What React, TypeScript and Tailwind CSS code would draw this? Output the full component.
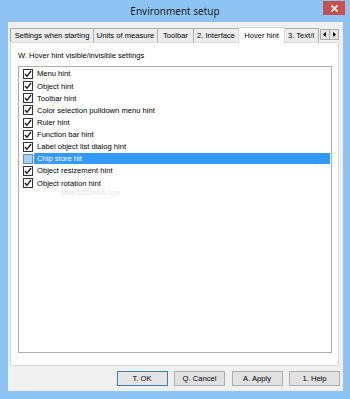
import React from "react";

const items: { label: string; checked: boolean; selected?: boolean }[] = [
  { label: "Menu hint", checked: true },
  { label: "Object hint", checked: true },
  { label: "Toolbar hint", checked: true },
  { label: "Color selection pulldown menu hint", checked: true },
  { label: "Ruler hint", checked: true },
  { label: "Function bar hint", checked: true },
  { label: "Label object list dialog hint", checked: true },
  { label: "Chip store hit", checked: false, selected: true },
  { label: "Object resizement hint", checked: true },
  { label: "Object rotation hint", checked: true },
];

function Check({ checked, selected }: { checked: boolean; selected?: boolean }) {
  return (
    <div
      className={
        selected
          ? "w-[10px] h-[10px] border border-[#5a8ec7] bg-[#a8cff5] shrink-0"
          : "w-[10px] h-[10px] border border-[#333333] bg-white shrink-0 flex items-center justify-center"
      }
    >
      {checked && (
        <svg width="8" height="8" viewBox="0 0 8 8">
          <path d="M1 4 L3 6.3 L7 1" fill="none" stroke="#111" strokeWidth="1.3" />
        </svg>
      )}
    </div>
  );
}

function Tab({ label, w, active }: { label: string; w: string; active?: boolean }) {
  if (active) {
    return (
      <div
        className={`${w} h-[16px] -mx-[1px] -mb-[1px] self-end bg-white border border-[#d9d9d9] border-b-0 flex items-center justify-center z-10 whitespace-nowrap`}
      >
        {label}
      </div>
    );
  }
  return (
    <div
      className={`${w} h-[14px] self-end bg-[#ececec] border border-[#acacac] border-b-0 -ml-[1px] first:ml-0 flex items-center justify-center whitespace-nowrap overflow-hidden`}
    >
      {label}
    </div>
  );
}

function Btn({ label, def }: { label: string; def?: boolean }) {
  return (
    <div
      className={
        def
          ? "w-[51px] h-[15px] border border-[#3c7fb1] bg-[#e5e5e5] flex items-center justify-center"
          : "w-[51px] h-[15px] border border-[#adadad] bg-[#e1e1e1] flex items-center justify-center"
      }
    >
      {label}
    </div>
  );
}

export default function App() {
  return (
    <div
      className="w-[350px] h-[399px] bg-[#8dc4f3] relative overflow-hidden text-[7.6px] text-black"
      style={{ fontFamily: '"Liberation Sans", Arial, sans-serif' }}
    >
      {/* Title bar */}
      <div className="h-[22px] flex items-center justify-center">
        <span
          className="text-[10px] text-[#1a1a1a] pt-[1px]"
          style={{ fontFamily: '"Noto Sans", "Open Sans", sans-serif' }}
        >
          Environment setup
        </span>
      </div>
      <div className="absolute top-[1px] right-[5px] w-[22px] h-[14px] bg-[#c75050] flex items-center justify-center">
        <svg width="7" height="7" viewBox="0 0 7 7">
          <path d="M0.5 0.5 L6.5 6.5 M6.5 0.5 L0.5 6.5" stroke="#fff" strokeWidth="1.6" />
        </svg>
      </div>

      {/* Client area */}
      <div className="ml-[8px] mr-[7px] h-[369px] bg-[#f0f0f0] flex flex-col px-[2px] pt-[6px]">
        {/* Tab row */}
        <div className="h-[14px] flex items-end relative">
          <Tab label="Settings when starting" w="w-[84px]" />
          <Tab label="Units of measure" w="w-[65px]" />
          <Tab label="Toolbar" w="w-[37px]" />
          <Tab label="2. Interface" w="w-[46px]" />
          <Tab label="Hover hint" w="w-[47px]" active />
          <div className="w-[36px] h-[14px] self-end bg-[#ececec] border border-[#acacac] border-b-0 -ml-[1px] overflow-hidden whitespace-nowrap pl-[4px] flex items-center">
            3. Text/I
          </div>
          <div className="absolute right-[2px] top-[1px] flex">
            <div className="w-[10px] h-[11px] bg-[#e6e6e6] border border-[#adadad] flex items-center justify-center">
              <svg width="4" height="5" viewBox="0 0 4 5">
                <path d="M3 0 L0 2.5 L3 5 Z" fill="#000" />
              </svg>
            </div>
            <div className="w-[10px] h-[11px] bg-[#e6e6e6] border border-[#adadad] -ml-[1px] flex items-center justify-center">
              <svg width="4" height="5" viewBox="0 0 4 5">
                <path d="M1 0 L4 2.5 L1 5 Z" fill="#000" />
              </svg>
            </div>
          </div>
        </div>

        {/* Panel */}
        <div className="w-[329px] h-[324px] bg-white border border-[#d9d9d9] flex flex-col px-[7px] pr-[6px]">
          <div className="h-[23px] flex items-end pb-[5px]">W. Hover hint visible/invisible settings</div>
          <div className="h-[287px] border border-[#acacac] flex flex-col pt-[1px] pl-[4px] pr-[1px] relative">
            {items.map((it) => (
              <div key={it.label} className="h-[12.14px] flex items-center shrink-0">
                <Check checked={it.checked} selected={it.selected} />
                <div
                  className={
                    it.selected
                      ? "flex-1 h-[11px] ml-[1px] bg-[#3399ff] text-white flex items-center pl-[3px]"
                      : "flex-1 h-[11px] ml-[1px] flex items-center pl-[3px]"
                  }
                >
                  {it.label}
                </div>
              </div>
            ))}
            <div className="absolute left-[41px] top-[121px] text-[7px] text-[#e6e6e6]">www.softpedia.com</div>
          </div>
        </div>

        {/* Buttons */}
        <div className="flex justify-end gap-[6.5px] mt-[5px] pr-[1px]">
          <Btn label="T. OK" def />
          <Btn label="Q. Cancel" />
          <Btn label="A. Apply" />
          <Btn label="1. Help" />
        </div>
      </div>
    </div>
  );
}
